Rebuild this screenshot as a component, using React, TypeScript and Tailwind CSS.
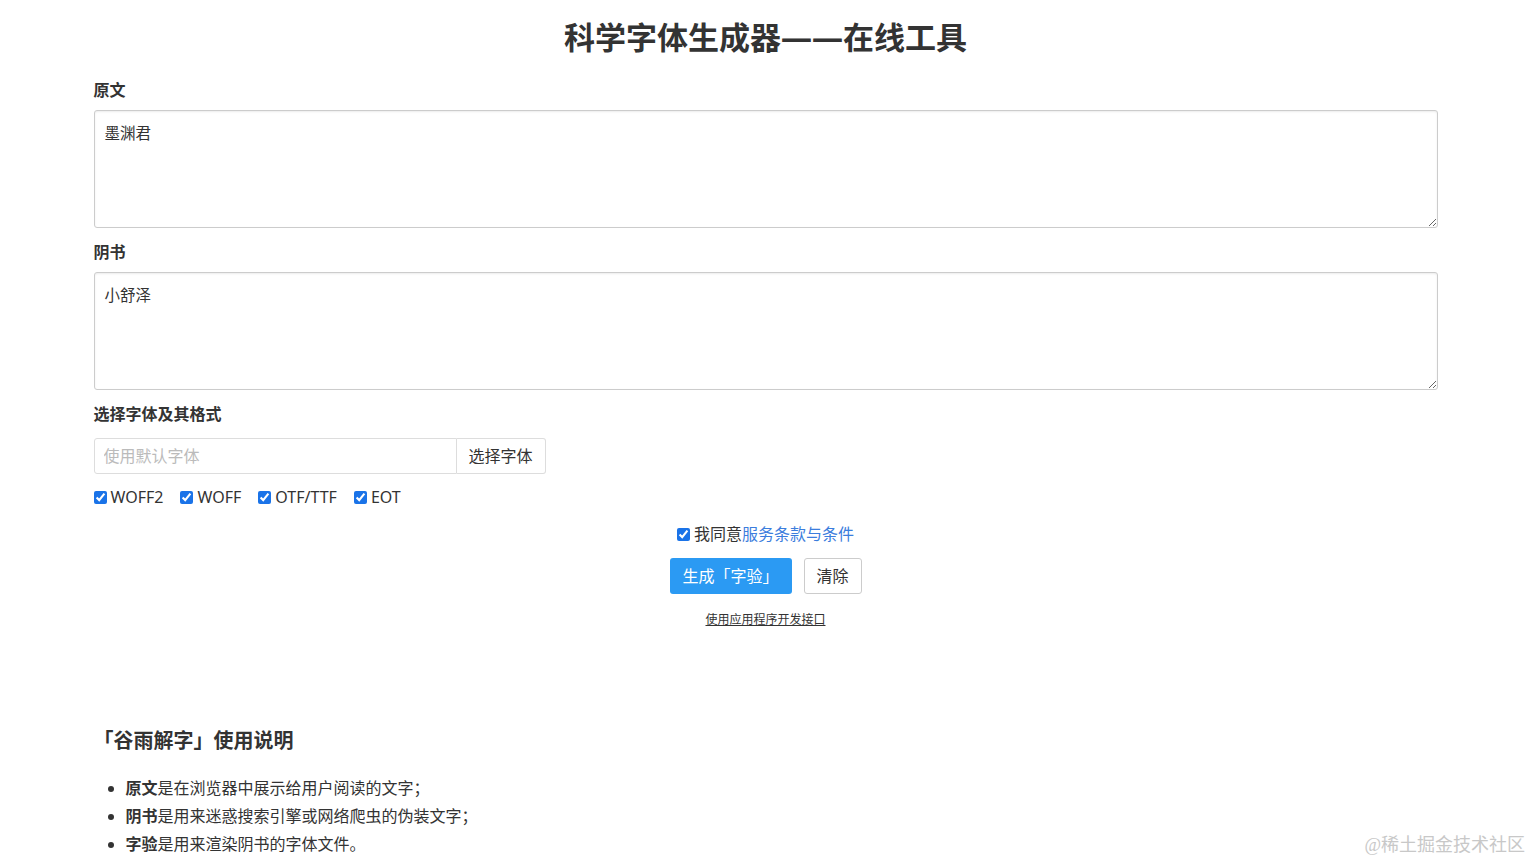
import * as React from "react";

const FONT = '"Noto Sans", "Noto Sans CJK SC", sans-serif';

function Check({ label, defaultChecked = true }: { label: React.ReactNode; defaultChecked?: boolean }) {
  return (
    <label className="flex items-center gap-[4px] text-[16px] text-[#333]">
      <input type="checkbox" defaultChecked={defaultChecked} className="h-[13px] w-[13px] accent-[#1a73e8]" />
      <span>{label}</span>
    </label>
  );
}

export default function App() {
  const [formats] = React.useState(["WOFF2", "WOFF", "OTF/TTF", "EOT"]);

  return (
    <div className="relative min-h-[865px] bg-white text-[#333]" style={{ fontFamily: FONT }}>
      <div className="mx-auto w-[1344px]">
        <h1 className="pt-[16px] text-center text-[31px] font-bold leading-[42px] text-[#333]">
          科学字体生成器——在线工具
        </h1>

        <div className="mt-[20px]">
          <div className="text-[16px] font-bold leading-[24px]">原文</div>
          <textarea
            defaultValue="墨渊君"
            className="mt-[8px] block h-[118px] w-full rounded-[3px] border border-[#ccc] px-[10px] py-[10px] text-[15.5px] leading-[24px] text-[#333] shadow-[inset_0_1px_2px_rgba(0,0,0,0.08)] outline-none"
          />
        </div>

        <div className="mt-[12px]">
          <div className="text-[16px] font-bold leading-[24px]">阴书</div>
          <textarea
            defaultValue="小舒泽"
            className="mt-[8px] block h-[118px] w-full rounded-[3px] border border-[#ccc] px-[10px] py-[10px] text-[15.5px] leading-[24px] text-[#333] shadow-[inset_0_1px_2px_rgba(0,0,0,0.08)] outline-none"
          />
        </div>

        <div className="mt-[12px]">
          <div className="text-[16px] font-bold leading-[24px]">选择字体及其格式</div>
          <div className="mt-[12px] flex h-[36px] w-[452px]">
            <input
              placeholder="使用默认字体"
              className="h-full w-[363px] rounded-l-[3px] border border-[#ddd] px-[9px] text-[16px] text-[#333] outline-none placeholder:text-[#bbb]"
            />
            <button className="h-full w-[89px] rounded-r-[3px] border border-l-0 border-[#ddd] bg-white text-[16px] text-[#333]">
              选择字体
            </button>
          </div>
          <div className="mt-[12px] flex items-center gap-[17px] leading-[22px]">
            {formats.map((f) => (
              <Check key={f} label={f} />
            ))}
          </div>
        </div>

        <div className="mt-[14px] flex flex-col items-center">
          <Check
            label={
              <>
                我同意<a className="text-[#3b7ddd]">服务条款与条件</a>
              </>
            }
          />
          <div className="mt-[12px] flex gap-[12px]">
            <button className="h-[36px] w-[122px] rounded-[3px] bg-[#2b9af3] text-[16px] text-white">生成「字验」</button>
            <button className="h-[36px] w-[58px] rounded-[3px] border border-[#ccc] bg-white text-[16px] text-[#333]">清除</button>
          </div>
          <a className="mt-[17px] text-[12px] leading-[18px] text-[#333] underline">使用应用程序开发接口</a>
        </div>

        <h2 className="mt-[97px] text-[20px] font-bold leading-[30px] text-[#333]">「谷雨解字」使用说明</h2>
        <ul className="mt-[18px] list-disc pl-[32px] text-[16px] leading-[28px] text-[#333]">
          <li>
            <b>原文</b>是在浏览器中展示给用户阅读的文字；
          </li>
          <li>
            <b>阴书</b>是用来迷惑搜索引擎或网络爬虫的伪装文字；
          </li>
          <li>
            <b>字验</b>是用来渲染阴书的字体文件。
          </li>
        </ul>
      </div>
      <div
        className="absolute bottom-[6px] right-[6px] text-[18px] text-[#c8c8c8]"
        style={{ fontFamily: '"Liberation Serif", "Noto Sans CJK SC", serif' }}
      >
        @稀土掘金技术社区
      </div>
    </div>
  );
}
